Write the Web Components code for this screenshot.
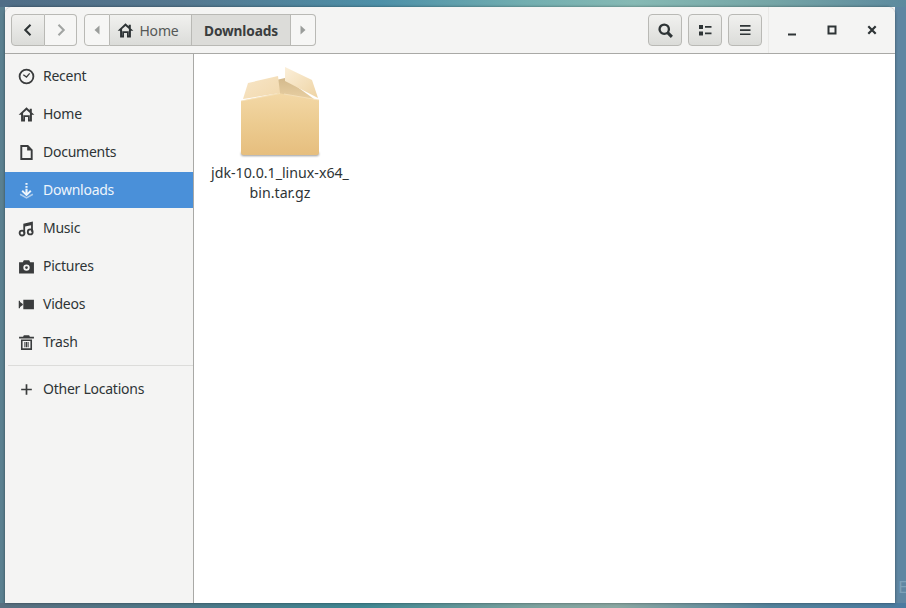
<!DOCTYPE html>
<html><head><meta charset="utf-8"><title>Files</title>
<style>
html,body{margin:0;padding:0;height:100%;overflow:hidden}
body{font-family:"Noto Sans","Open Sans",sans-serif;color:#2e3436}
</style></head><body>
<template id="t-desk"><style>
:host{display:flex;box-sizing:border-box;width:906px;height:608px;padding:7px 11px 5px 5px;
background:
linear-gradient(90deg,#4f6d86 0%,#54778f 20%,#4d90a8 42%,#72aeb0 58%,#86b9b4 70%,#75a5a6 85%,#5d8a9e 100%) top/100% 7px no-repeat,
linear-gradient(90deg,#596f80 0%,#4a7a8a 25%,#3f8792 40%,#7fa39f 60%,#8aa7a2 68%,#53829b 85%,#4b7ba0 100%) bottom/100% 5px no-repeat,
linear-gradient(90deg,#5b8090 0 5px,transparent 5px 895px,#5f86a2 895px)}
.e{position:absolute;left:898px;top:575px;color:#7da0b8;font:17px "Noto Sans",sans-serif}
</style><span class="e">E</span><slot></slot></template>

<template id="t-win"><style>
:host{display:flex;flex-direction:column;flex:1;border-radius:8px 8px 0 0;overflow:hidden;background:#fff;box-shadow:0 0 3px rgba(0,0,0,.45);position:relative}
.body{flex:1;display:flex;min-height:0}
</style><slot name="bar"></slot><div class="body"><slot></slot></div></template>

<template id="t-bar"><style>
:host{display:flex;align-items:center;box-sizing:border-box;height:47px;flex:none;background:#f4f4f3;border-bottom:1px solid #a9a9a6;padding:0 0 0 6px}
.group{display:flex;height:32px}
.sp{flex:1}
.path{margin-left:7px}
.sep{width:1px;height:46px;background:#e9e9e7;margin:0 0 0 6px}
.wc{display:flex;width:126px;padding-left:3px;box-sizing:border-box}
</style>
<div class="group"><slot name="nav"></slot></div>
<div class="group path"><slot name="path"></slot></div>
<div class="sp"></div>
<slot name="tools"></slot>
<div class="sep"></div>
<div class="wc"><slot name="wc"></slot></div>
</template>

<template id="t-btn"><style>
:host{display:flex;align-items:center;justify-content:center;gap:6px;box-sizing:border-box;height:32px;flex:none;border:1px solid #b9b9b5;background:linear-gradient(#f1f1ef,#dbdcd9);font-size:14px;letter-spacing:-.15px;color:#2e3436}
:host([first]){border-radius:4px 0 0 4px}
:host([last]){border-radius:0 4px 4px 0}
:host([solo]){border-radius:4px;margin-left:6px;width:34px}
:host([flat]){background:#f6f6f5;color:#a0a3a1}
:host([cur]){background:#dcdcd9;font-weight:700;font-size:13.700px;color:#3a3d3e}
:host([noleft]){border-left:none}
:host([bare]){background:none;border:none;height:32px;width:40px;flex:none;color:#2e3436}
</style><slot></slot></template>

<template id="t-side"><style>
:host{display:flex;flex-direction:column;flex:none;box-sizing:border-box;width:189px;background:#f4f4f3;border-right:1px solid #a9a9a6;padding-top:4px}
hr{border:0;border-top:1px solid #dcdcda;margin:5px 0 5px 3px;height:0}
.list{display:flex;flex-direction:column;gap:2px}
</style><div class="list"><slot></slot></div><hr><slot name="other"></slot></template>

<template id="t-row"><style>
:host{display:flex;align-items:center;height:36px;box-sizing:border-box;padding-left:14px;gap:9px;font-size:14px;color:#2e3436;letter-spacing:-.25px}
:host([active]){background:#4a90d9;color:#eef5fc}
.i{width:15px;height:16px;display:flex;align-items:center;justify-content:center;color:#3a3c3d}
:host([active]) .i{color:#eef5fc}
.t{padding-bottom:2px}
::slotted(svg){flex:none;width:17px;height:17px}
</style><span class="i"><slot name="icon"></slot></span><span class="t"><slot></slot></span></template>

<template id="t-view"><style>
:host{display:block;flex:1;background:#fff;padding:12px 0 0 16px}
</style><slot></slot></template>

<template id="t-file"><style>
:host{display:flex;flex-direction:column;align-items:center;width:140px;font-size:14.200px;line-height:20px;color:#2e3436;text-align:center}
.l{margin-top:1px;white-space:pre-line}
</style><slot name="icon"></slot><div class="l"><slot></slot></div></template>

<x-desk>
<x-win>
<x-bar slot="bar">
  <x-btn slot="nav" first style="width:34px"><svg width="16" height="16" viewBox="0 0 16 16"><path d="M10.500 2.800 5.300 8l5.200 5.200" fill="none" stroke="#2e3436" stroke-width="2.100"/></svg></x-btn>
  <x-btn slot="nav" last flat noleft style="width:32px"><svg width="16" height="16" viewBox="0 0 16 16"><path d="M5.500 2.800 10.700 8l-5.200 5.200" fill="none" stroke="#a2a5a3" stroke-width="2.100"/></svg></x-btn>

  <x-btn slot="path" first flat style="width:26px"><svg width="10" height="12" viewBox="0 0 10 12"><path d="M7.500 1.500v9L2.500 6z" fill="#9a9d9b"/></svg></x-btn>
  <x-btn slot="path" noleft style="width:82px;gap:5px;color:#555857;padding-right:5px"><svg width="17" height="17" viewBox="0 0 16 16"><path d="M8 1.200.6 8.200h2.300v6.300h3.700v-4.200h2.800v4.200h3.700V8.200h2.300L13 6V2.500h-2v1.600zM8 3.700l3.200 3v6H11V8.600H5v4.100h-.2v-6z" fill="#2e3436" fill-rule="evenodd"/></svg><span>Home</span></x-btn>
  <x-btn slot="path" cur noleft style="width:99px">Downloads</x-btn>
  <x-btn slot="path" last flat noleft style="width:25px"><svg width="10" height="12" viewBox="0 0 10 12"><path d="M2.500 1.500v9l5-4.500z" fill="#9a9d9b"/></svg></x-btn>

  <x-btn slot="tools" solo><svg width="17" height="17" viewBox="0 0 16 16"><circle cx="6.800" cy="6.800" r="4.400" fill="none" stroke="#2e3436" stroke-width="2.200"/><path d="m10 10 4 4" stroke="#2e3436" stroke-width="2.800"/></svg></x-btn>
  <x-btn slot="tools" solo><svg width="16" height="16" viewBox="0 0 16 16"><path d="M2 3h4v4H2zM2 9.500h4v4H2zM8 4h6.500v1.800H8zM8 10.500h6.500v1.800H8z" fill="#2e3436"/></svg></x-btn>
  <x-btn slot="tools" solo><svg width="16" height="16" viewBox="0 0 16 16"><path d="M3 3h10.500v1.700H3zM3 7.200h10.500v1.700H3zM3 11.400h10.500v1.700H3z" fill="#2e3436"/></svg></x-btn>

  <x-btn slot="wc" bare><svg width="16" height="16" viewBox="0 0 16 16"><path d="M4 11.500h8v2H4z" fill="#2e3436"/></svg></x-btn>
  <x-btn slot="wc" bare><svg width="16" height="16" viewBox="0 0 16 16"><path d="M4.500 4.500h7v7h-7z" fill="none" stroke="#2e3436" stroke-width="2"/></svg></x-btn>
  <x-btn slot="wc" bare><svg width="16" height="16" viewBox="0 0 16 16"><path d="m4.300 4.300 7.400 7.400M11.700 4.300l-7.400 7.400" fill="none" stroke="#2e3436" stroke-width="2.200"/></svg></x-btn>
</x-bar>

<x-side>
  <x-row><svg slot="icon" viewBox="0 0 16 16"><circle cx="8" cy="8" r="6.500" fill="none" stroke="currentColor" stroke-width="1.700"/><path d="M5 6.300 8 8.500l3-3.500" fill="none" stroke="currentColor" stroke-width="1.200"/></svg>Recent</x-row>
  <x-row><svg slot="icon" viewBox="0 0 16 16"><path d="M8 1.200.6 8.200h2.300v6.300h3.700v-4.200h2.800v4.200h3.700V8.200h2.300L13 6V2.500h-2v1.600zM8 3.700l3.200 3v6H11V8.600H5v4.100h-.2v-6z" fill="currentColor" fill-rule="evenodd"/></svg>Home</x-row>
  <x-row><svg slot="icon" viewBox="0 0 16 16"><path d="M2.200 1h7.300l4.300 4.300v9.700H2.200zM4 2.800v10.400h8V6.200H8.600V2.800z" fill="currentColor" fill-rule="evenodd"/></svg>Documents</x-row>
  <x-row active><svg slot="icon" viewBox="0 0 16 16"><path d="M7 1h2v1.700H7zM7 3.700h2v1.700H7zM7 6.400h2V10l2.400-2.400 1.300 1.300L8 13.500 3.300 8.900l1.300-1.300L7 10z" fill="currentColor"/><path d="M2 11.500 8 15l6-3.500" fill="none" stroke="currentColor" stroke-width="1.500" opacity=".6"/></svg>Downloads</x-row>
  <x-row><svg slot="icon" viewBox="0 0 16 16"><path d="M5 3.500 14 1.500v9.500h-1.700V5L6.700 6.200v6.500H5z" fill="currentColor"/><circle cx="3.800" cy="12.300" r="2.300" fill="none" stroke="currentColor" stroke-width="1.700"/><circle cx="11.500" cy="11.200" r="2.300" fill="none" stroke="currentColor" stroke-width="1.700"/></svg>Music</x-row>
  <x-row><svg slot="icon" viewBox="0 0 16 16"><path d="M1 4h3.500l1-2h5l1 2H15v10.500H1zM8 6a3 3 0 1 0 0 6 3 3 0 0 0 0-6zm0 1.700a1.300 1.300 0 1 1 0 2.600 1.300 1.300 0 0 1 0-2.600z" fill="currentColor" fill-rule="evenodd"/></svg>Pictures</x-row>
  <x-row><svg slot="icon" viewBox="0 0 16 16"><path d="M5 3.500h10v9H5zM1 5l3.500 2.500v1L1 11z" fill="currentColor"/><path d="M.7 4.500h1.200v7H.7z" fill="currentColor"/></svg>Videos</x-row>
  <x-row><svg slot="icon" viewBox="0 0 16 16"><path d="M5.500 1.200h5l.7 1.500H15v1.600H1V2.700h3.800z" fill="currentColor"/><path d="M2.800 5.200h10.400V15H2.800zM4.300 6.500v7h7.400v-7z" fill="currentColor" fill-rule="evenodd"/><path d="M6 7.500h1v5H6zM7.500 7.500h1v5h-1zM9 7.500h1v5H9z" fill="currentColor"/></svg>Trash</x-row>
  <x-row slot="other"><svg slot="icon" viewBox="0 0 16 16"><path d="M7.200 3h1.600v4.200H13v1.600H8.800V13H7.200V8.800H3V7.200h4.200z" fill="currentColor"/></svg>Other Locations</x-row>
</x-side>

<x-view>
  <x-file><svg slot="icon" width="84" height="96" viewBox="0 0 84 96" style="display:block">
    <defs>
      <linearGradient id="f" x1="0" y1="0" x2="0" y2="1"><stop offset="0" stop-color="#f3d8a6"/><stop offset=".5" stop-color="#eccb90"/><stop offset="1" stop-color="#e6be7e"/></linearGradient>
      <linearGradient id="tl" x1="0" y1="0" x2="1" y2="1"><stop offset="0" stop-color="#f7e5c6"/><stop offset="1" stop-color="#f2d9ae"/></linearGradient>
      <linearGradient id="tr" x1="0" y1="0" x2="1" y2="1"><stop offset="0" stop-color="#fbefd9"/><stop offset="1" stop-color="#eed3a3"/></linearGradient>
      <linearGradient id="in" x1="0" y1="0" x2="0" y2="1"><stop offset="0" stop-color="#d3b98c"/><stop offset="1" stop-color="#e8cfa2"/></linearGradient>
      <filter id="b" x="-10%" y="-100%" width="120%" height="300%"><feGaussianBlur stdDeviation="1.200"/></filter>
    </defs>
    <rect x="3" y="86" width="78" height="4" rx="2" fill="#000" opacity=".4" filter="url(#b)"/>
    <path d="M38 14 47 12 76 33H40z" fill="url(#in)"/>
    <path d="M3 35 41 27 45 28 81 34V86.500Q81 89 78.500 89H5.500Q3 89 3 86.500z" fill="url(#f)"/>
    <path d="M5 33 10 17 40 10 42 27z" fill="url(#tl)"/>
    <path d="M47 1 74 14 80 32 47 15z" fill="url(#tr)"/>
    <path d="M3 35 42 27.500M46 28 81 34" fill="none" stroke="#f6e3bf" stroke-width=".8"/>
  </svg>jdk-10.0.1_linux-x64_
bin.tar.gz</x-file>
</x-view>
</x-win>
</x-desk>

<script>
const mk=(name,tid)=>customElements.define(name,class extends HTMLElement{
  constructor(){super();this.attachShadow({mode:'open'}).appendChild(document.getElementById(tid).content.cloneNode(true));}
});
[['x-desk','t-desk'],['x-win','t-win'],['x-bar','t-bar'],['x-btn','t-btn'],['x-side','t-side'],['x-row','t-row'],['x-view','t-view'],['x-file','t-file']].forEach(a=>mk(...a));
</script>
</body></html>
